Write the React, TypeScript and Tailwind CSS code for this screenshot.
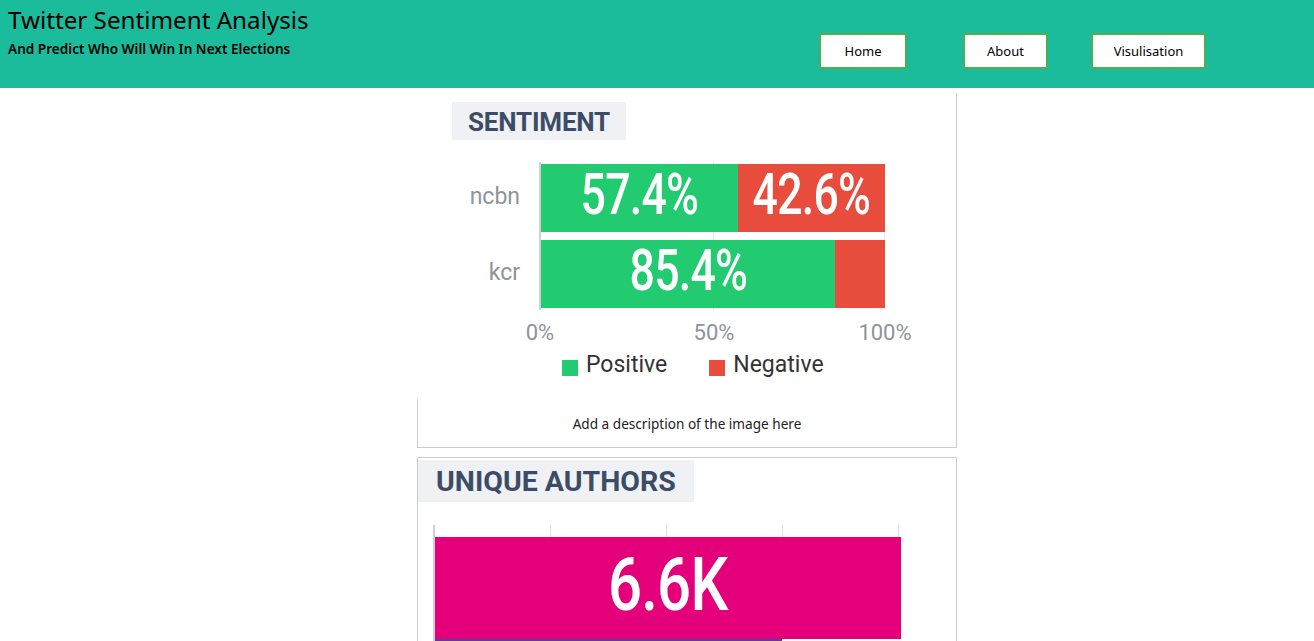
import React from "react";

const GREEN = "bg-[#22cb70]";

function BarLabel({ text }: { text: string }) {
  return (
    <span className="text-white font-medium text-[58px] leading-none inline-block whitespace-nowrap scale-x-[0.77] tracking-[-1px] mb-[8px] -mx-[20px]">
      {text}
    </span>
  );
}

function SentimentChart() {
  const rows = [
    { name: "ncbn", pos: 57.4, posLabel: "57.4%", negLabel: "42.6%" },
    { name: "kcr", pos: 85.4, posLabel: "85.4%", negLabel: "" },
  ];
  return (
    <div className="h-[306px] bg-white font-['Roboto',sans-serif]">
      <div className="pt-[9px] pl-[35px]">
        <div className="w-[174px] h-[38px] bg-[#eff1f4] flex items-center pl-[16px]">
          <span className="text-[26px] font-bold text-[#3d4c66] tracking-[-0.2px] mt-[3px]">SENTIMENT</span>
        </div>
      </div>
      <div className="mt-[22px] flex">
        <div className="w-[122px] pt-[2px] flex flex-col gap-[8px] pr-[19px]">
          {rows.map((r) => (
            <div key={r.name} className="h-[68px] flex items-center justify-end text-[23px] text-[#8c9599] pb-[2px]">
              {r.name}
            </div>
          ))}
        </div>
        <div className="relative w-[346px] h-[148px] border-l-2 border-[#cdd2d4]">
          <div className="absolute left-[172px] top-0 h-full w-px bg-[#e3e6e8]" />
          <div className="absolute left-[343px] top-0 h-full w-px bg-[#e3e6e8]" />
          <div className="relative pt-[2px] flex flex-col gap-[8px]">
            {rows.map((r) => (
              <div key={r.name} className="h-[68px] w-[344px] flex">
                <div
                  className={`${GREEN} h-full shrink-0 flex items-center justify-center`}
                  style={{ width: `${r.pos}%` }}
                >
                  <BarLabel text={r.posLabel} />
                </div>
                <div className="bg-[#e74c3c] h-full min-w-0 flex-1 flex items-center justify-center">
                  {r.negLabel && <BarLabel text={r.negLabel} />}
                </div>
              </div>
            ))}
          </div>
        </div>
      </div>
      <div className="relative h-[30px] mt-[6px] text-[22px] text-[#8c9599]">
        <span className="absolute left-[123px] -translate-x-1/2 top-0">0%</span>
        <span className="absolute left-[297px] -translate-x-1/2 top-0">50%</span>
        <span className="absolute left-[468px] -translate-x-1/2 top-0">100%</span>
      </div>
      <div className="flex items-center pl-[145px] mt-[2px] text-[23px] text-[#333]">
        <span className={`w-[16px] h-[16px] ${GREEN} mt-[6px]`} />
        <span className="ml-[8px]">Positive</span>
        <span className="w-[16px] h-[16px] bg-[#e74c3c] ml-[42px] mt-[6px]" />
        <span className="ml-[8px]">Negative</span>
      </div>
    </div>
  );
}

function AuthorsChart() {
  return (
    <div className="bg-white font-['Roboto',sans-serif] h-[183px] overflow-hidden">
      <div className="pt-[2px]">
        <div className="w-[276px] h-[42px] bg-[#eff1f4] flex items-center pl-[18px]">
          <span className="text-[28.5px] font-bold text-[#3d4c66] mt-[2px]">UNIQUE AUTHORS</span>
        </div>
      </div>
      <div className="relative ml-[15px] mt-[23px] w-[467px] h-[120px] border-l-2 border-[#cdd2d4]">
        <div className="absolute left-[115px] top-0 h-[12px] w-px bg-[#dfe2e4]" />
        <div className="absolute left-[231px] top-0 h-[12px] w-px bg-[#dfe2e4]" />
        <div className="absolute left-[347px] top-0 h-[12px] w-px bg-[#dfe2e4]" />
        <div className="absolute left-[463px] top-0 h-[12px] w-px bg-[#dfe2e4]" />
        <div className="pt-[12px]">
          <div className="w-[466px] h-[102px] bg-[#e3007a] flex items-center justify-center">
            <span className="text-white font-medium text-[75px] leading-none inline-block scale-x-[0.8] tracking-[-1px] mb-[8px]">
              6.6K
            </span>
          </div>
          <div className="w-[347px] h-[6px] bg-[#5a3f98]" />
        </div>
      </div>
    </div>
  );
}

export default function App() {
  const navBtn =
    "h-[36px] bg-white border-2 border-[#4caf50] flex items-center justify-center text-[13px] text-black";
  return (
    <div className="min-h-[641px] bg-white font-['Noto_Sans',sans-serif]">
      <header className="h-[88px] bg-[#1abc9c] flex justify-between">
        <div className="pl-[8px] pt-[3px]">
          <h1 className="text-[24.2px] leading-[34px] text-black">Twitter Sentiment Analysis</h1>
          <p className="text-[13.6px] font-semibold leading-[18px] mt-[3px] text-black">
            And Predict Who Will Win In Next Elections
          </p>
        </div>
        <nav className="flex items-start pt-[33px] pr-[108px]">
          <a className={`${navBtn} w-[88px] pt-px`}>Home</a>
          <a className={`${navBtn} w-[85px] ml-[56px] pt-px`}>About</a>
          <a className={`${navBtn} w-[115px] ml-[43px] pt-px`}>Visulisation</a>
        </nav>
      </header>
      <main className="ml-[417px] w-[540px] pt-[5px]">
        <figure className="border-r border-b border-[#cccccc]">
          <SentimentChart />
          <figcaption className="border-l border-[#cccccc] h-[48px] flex items-center justify-center pt-[3px] text-[13.6px] text-[#222]">
            Add a description of the image here
          </figcaption>
        </figure>
        <figure className="mt-[9px] border-t border-l border-r border-[#cccccc]">
          <AuthorsChart />
        </figure>
      </main>
    </div>
  );
}
